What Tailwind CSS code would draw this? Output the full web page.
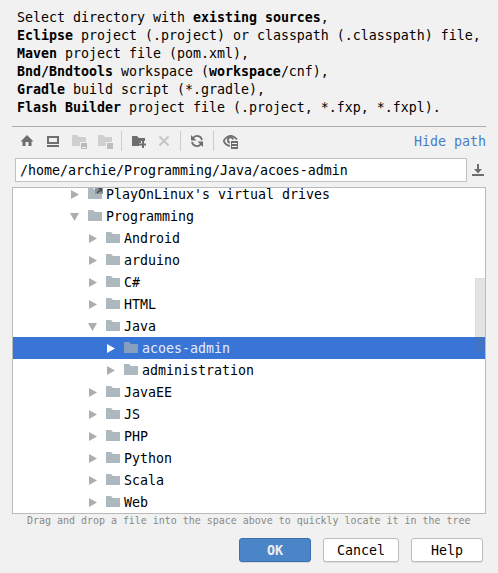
<!DOCTYPE html>
<html lang="en">
<head>
<meta charset="utf-8">
<title>Select directory</title>
<script src="https://cdn.jsdelivr.net/npm/@tailwindcss/browser@4"></script>
</head>
<body class="w-[498px] h-[573px] overflow-hidden bg-[#f1f1f1] text-black font-['DejaVu_Sans_Mono',monospace] text-[13.29px] leading-[18px] whitespace-nowrap">
<svg class="hidden">
  <symbol id="folder" viewBox="0 0 14 11"><path d="M0 0H5L7 2H14V11H0Z"/></symbol>
  <symbol id="right" viewBox="0 0 9 10"><path d="M1 1L9 5.500L1 10Z"/></symbol>
  <symbol id="down" viewBox="0 0 9 10"><path d="M0 2H9L4.500 10Z"/></symbol>
</svg>
<div class="flex flex-col w-[498px] h-[573px]">
  <div class="h-[126px] pt-[9px] pl-[17px] shrink-0">
    <div>Select directory with <b>existing sources</b>,</div>
    <div><b>Eclipse</b> project (.project) or classpath (.classpath) file,</div>
    <div><b>Maven</b> project file (pom.xml),</div>
    <div><b>Bnd/Bndtools</b> workspace (<b>workspace</b>/cnf),</div>
    <div><b>Gradle</b> build script (*.gradle),</div>
    <div><b>Flash Builder</b> project file (.project, *.fxp, *.fxpl).</div>
  </div>
  <div class="flex h-[32px] ml-[12px] w-[474px] shrink-0 border-t border-[#adadad]">
    <svg class="w-[234px] h-[31px]" viewBox="12 127 234 31" fill="#6e6e6e">
      <path d="M27 135L33.5 141.5H31.5V146H28.5V142H25.5V146H22.5V141.5H20.5Z"/>
      <path fill-rule="evenodd" d="M47 136H59V144H47ZM49 138V142H57V138ZM47 145H59V147H47Z"/>
      <g fill="#cfcfcf">
        <path d="M72 135H77L79 137H86V142H80V146H72Z"/><path fill="#b9b9b9" d="M81 143H87V149H81Z"/><path fill="#f1f1f1" d="M82 147H86V148H82Z"/>
        <path d="M98 135H103L105 137H112V142H106V146H98Z"/><path fill="#bdbdbd" d="M107 143H113V149H107Z"/>
      </g>
      <path fill="#cdcdcd" d="M121 131H122V151H121ZM180 131H181V151H180ZM213 131H214V151H213Z"/>
      <path d="M132 136H137L139 138H145V141H141V143H139V146H132Z"/><path d="M142 141H144V143.5H146V145.5H144V148H142V145.5H139V143.5H142Z"/>
      <path d="M159.500 136.500L168.500 145.500M168.500 136.500L159.500 145.500" stroke="#c5c5c5" stroke-width="2"/>
      <path d="M202 140A5 5 0 0 0 193 138M192 142A5 5 0 0 0 201 144" fill="none" stroke="#6e6e6e" stroke-width="1.800"/>
      <path d="M191 135V140.500H196.500ZM203 147V141.500H197.500Z"/>
      <path d="M223.500 141Q230 131.500 237 139.500M223.500 141Q226 145.500 230 146" fill="none" stroke="#6e6e6e" stroke-width="1.700"/>
      <path d="M233 139.500A2.600 2.600 0 1 0 230 142.600" fill="none" stroke="#6e6e6e" stroke-width="1.700"/>
      <path fill-rule="evenodd" d="M231 141H238V149H231ZM232 143V144H237V143ZM232 146V147H237V146Z"/>
    </svg>
    <div class="ml-auto pt-[6px] text-[#4a7cca]">Hide path</div>
  </div>
  <div class="flex h-[29px] pl-[15px] shrink-0">
    <div class="w-[452px] h-[24px] bg-white border border-[#c0c0c0] pl-[4px] pt-[3px] leading-[17px]">/home/archie/Programming/Java/acoes-admin</div>
    <svg class="w-[14px] h-[24px] ml-[4px]" viewBox="471 158 14 24" fill="#6e6e6e"><path d="M477 164H479V169H482L478 173.500L474 169H477ZM472 174H484V176H472Z"/></svg>
  </div>
  <div id="tree" class="relative ml-[12px] w-[474px] h-[327px] shrink-0 overflow-hidden bg-white border border-[#bababa]">
    <div id="rows" class="-mt-[5px]"></div>
    <div class="absolute right-0 top-[90px] w-[10px] h-[73px] bg-[#737373]/20 border border-r-0 border-black/2"></div>
  </div>
  <div class="h-[24px] pl-[27px] shrink-0 text-[9.967px] leading-[13px] text-[#888888]">Drag and drop a file into the space above to quickly locate it in the tree</div>
  <div class="flex gap-[12px] pl-[239px] shrink-0 leading-[24px] text-center">
    <div class="w-[72px] h-[24px] rounded-[3px] bg-[#4a86c7] border border-[#3a70b2] text-[#eeeeee] font-bold shadow-[0_1px_0_#d8d8d8]">OK</div>
    <div class="w-[76px] h-[24px] rounded-[3px] bg-white border border-[#bbbbbb] shadow-[0_1px_0_#dcdcdc]">Cancel</div>
    <div class="w-[72px] h-[24px] rounded-[3px] bg-white border border-[#bbbbbb] shadow-[0_1px_0_#dcdcdc]">Help</div>
  </div>
</div>
<script>
const items = [
  ["PlayOnLinux's virtual drives", 0, 'link'], ['Programming', 0, 'open'],
  ['Android', 1], ['arduino', 1], ['C#', 1], ['HTML', 1], ['Java', 1, 'open'],
  ['acoes-admin', 2, 'selected'], ['administration', 2],
  ['JavaEE', 1], ['JS', 1], ['PHP', 1], ['Python', 1], ['Scala', 1], ['Web', 1]
];
document.getElementById('rows').innerHTML = items.map(([name, level, state]) => {
  const sel = state === 'selected';
  const link = state === 'link' ? '<svg class="absolute -right-px top-0 w-[8px] h-[6px]" viewBox="0 0 8 6"><path fill="#8b979e" d="M0 0H8V6H0Z"/><path d="M3 0H7V4L5.500 3L2.500 5.500L1.500 4.500L4.500 1.500Z" fill="#4c5154"/></svg>' : '';
  return `<div class="flex items-center h-[22px] ${sel ? 'bg-[#3875d7] text-[#e6edf8]' : ''}" style="padding-left:${57 + level * 18}px">` +
    `<svg class="w-[9px] h-[10px] ${sel ? 'fill-white' : 'fill-[#adadad]'}"><use href="#${state === 'open' ? 'down' : 'right'}"/></svg>` +
    `<div class="relative ml-[9px] mr-[4px] mb-[1px] w-[14px] h-[11px]"><svg class="w-[14px] h-[11px] ${sel ? 'fill-[#879fbd]' : 'fill-[#adb8bf]'}"><use href="#folder"/></svg>${link}</div>` +
    `<span class="pt-[2px]">${name}</span></div>`;
}).join('');
</script>
</body>
</html>
